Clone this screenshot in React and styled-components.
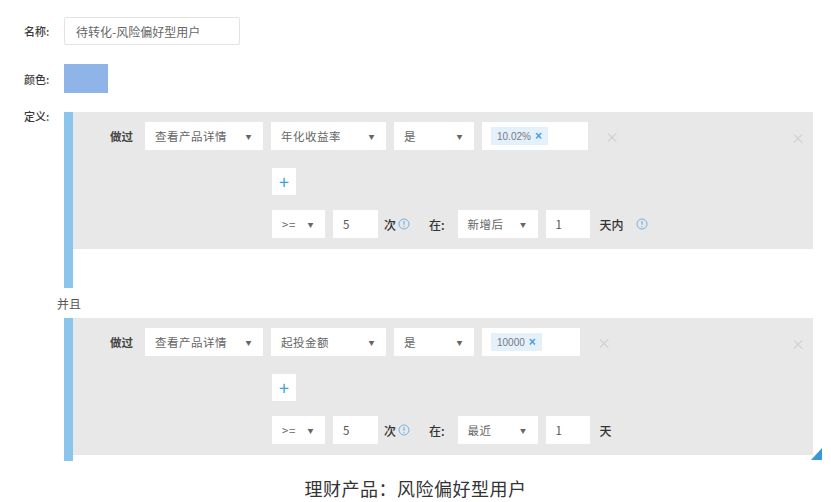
import React from "react";
import styled, { createGlobalStyle } from "styled-components";

const GlobalStyle = createGlobalStyle`
  html, body {
    margin: 0;
    padding: 0;
    background: #ffffff;
  }
  body {
    font-family: "Noto Sans CJK SC", "Noto Sans", "Liberation Sans", sans-serif;
    font-size: 12px;
    color: #333;
  }
`;

const Page = styled.div`
  width: 831px;
  height: 502px;
  overflow: hidden;
  box-sizing: border-box;
  padding: 17px 18px 0 24px;
`;

const Form = styled.div`
  display: grid;
  grid-template-columns: 40px 1fr;
  row-gap: 19px;
`;

const Label = styled.div`
  font-size: 11px;
  font-weight: 500;
  color: #3a3a3a;
  display: flex;
  align-items: ${(p) => (p.top ? "flex-start" : "center")};
  line-height: 16px;
  margin-top: ${(p) => (p.top ? "-4px" : "0")};
`;

const NameInput = styled.div`
  width: 176px;
  height: 28px;
  box-sizing: border-box;
  border: 1px solid #e3e3e3;
  border-radius: 2px;
  display: flex;
  align-items: center;
  padding-left: 11px;
  color: #666;
  font-size: 12px;
`;

const Swatch = styled.div`
  width: 44px;
  height: 29px;
  background: #8fb4e8;
`;

const Blocks = styled.div`
  display: flex;
  flex-direction: column;
`;

const Block = styled.div`
  display: flex;
  position: relative;
`;

const Bar = styled.div`
  width: 9px;
  background: #8cc5ec;
  flex-shrink: 0;
`;

const BlockBody = styled.div`
  flex: 1;
  display: flex;
  flex-direction: column;
`;

const Panel = styled.div`
  background: #e8e8e8;
  padding: 10px 0 11px 37px;
  display: flex;
  flex-direction: column;
  position: relative;
`;

const Spacer = styled.div`
  height: ${(p) => p.h}px;
`;

const Row = styled.div`
  display: flex;
  align-items: center;
  height: 28px;
  margin-left: ${(p) => p.indent || 0}px;
  margin-top: ${(p) => p.mt || 0}px;
`;

const Verb = styled.span`
  font-weight: 700;
  color: #444;
  font-size: 11.5px;
  width: 35px;
`;

const Select = styled.div`
  width: ${(p) => p.w}px;
  height: 28px;
  box-sizing: border-box;
  background: #fff;
  display: flex;
  align-items: center;
  justify-content: space-between;
  padding: 0 11px 0 10px;
  margin-right: 8px;
  color: #666;
  font-size: 11.5px;
  letter-spacing: 0.5px;
`;

const Caret = styled.span`
  font-size: 6px;
  color: #666;
`;

const TextBox = styled.div`
  width: ${(p) => p.w}px;
  height: 28px;
  box-sizing: border-box;
  background: #fff;
  display: flex;
  align-items: center;
  padding-left: ${(p) => p.pl || 10}px;
  margin-right: ${(p) => p.mr || 8}px;
  color: #555;
  font-size: 11.5px;
`;

const Tag = styled.span`
  display: inline-flex;
  align-items: center;
  gap: 4px;
  height: 18px;
  padding: 0 6px 0 6px;
  background: #e4f1fb;
  color: #778;
  font-size: 10px;
  font-family: "Liberation Sans", "Noto Sans", sans-serif;
`;

const TagClose = styled.span`
  color: #4a9fdc;
  font-size: 12px;
  font-weight: 700;
`;

const Remove = styled.span`
  color: #d0d0d0;
  font-size: 14px;
  margin-left: 9px;
`;

const RemoveFar = styled.span`
  position: absolute;
  right: 8px;
  top: 15px;
  color: #d0d0d0;
  font-size: 14px;
`;

const PlusButton = styled.div`
  width: 24px;
  height: 27px;
  background: #fff;
  display: flex;
  align-items: center;
  justify-content: center;
  color: #3f9fe0;
  font-size: 18px;
  line-height: 1;
`;

const Unit = styled.span`
  color: #333;
  font-weight: 500;
  margin-right: ${(p) => p.mr || 0}px;
  margin-left: ${(p) => p.ml || 0}px;
`;

const InfoWrap = styled.span`
  display: flex;
  margin-left: ${(p) => p.ml || 2}px;
`;

const InfoIcon = ({ ml }) => (
  <InfoWrap ml={ml}>
    <svg width="12" height="12" viewBox="0 0 12 12">
      <circle cx="6" cy="6" r="5" fill="none" stroke="#6fb3e8" strokeWidth="1" />
      <line x1="6" y1="3" x2="6" y2="6.8" stroke="#6fb3e8" strokeWidth="1.2" />
      <circle cx="6" cy="8.6" r="0.7" fill="#6fb3e8" />
    </svg>
  </InfoWrap>
);

const AndLabel = styled.div`
  height: 30px;
  display: flex;
  align-items: center;
  margin-left: -7px;
  color: #555;
  font-size: 12px;
`;

const Resize = styled.div`
  position: absolute;
  right: -9px;
  bottom: 1px;
  width: 0;
  height: 0;
  border-left: 11px solid transparent;
  border-bottom: 12px solid #3a97d8;
`;

const Caption = styled.div`
  text-align: center;
  margin-top: 14px;
  margin-left: -24px;
  margin-right: -18px;
  font-size: 18px;
  color: #333;
  letter-spacing: 0.5px;
`;

function Condition({ field, tag, tagWidth, when, unit, last }) {
  return (
    <Panel>
      <Row>
        <Verb>做过</Verb>
        <Select w={118}>
          查看产品详情<Caret>▼</Caret>
        </Select>
        <Select w={115}>
          {field}
          <Caret>▼</Caret>
        </Select>
        <Select w={80}>
          是<Caret>▼</Caret>
        </Select>
        <TextBox w={tagWidth} pl={9} mr={0}>
          <Tag>
            {tag}
            <TagClose>×</TagClose>
          </Tag>
        </TextBox>
        <Remove>×</Remove>
      </Row>
      <RemoveFar>×</RemoveFar>
      <Row indent={162} mt={17}>
        <PlusButton>+</PlusButton>
      </Row>
      <Row indent={162} mt={15}>
        <Select w={53}>
          <span>&gt;=</span>
          <Caret>▼</Caret>
        </Select>
        <TextBox w={45} mr={6}>5</TextBox>
        <Unit>次</Unit>
        <InfoIcon />
        <Unit ml={19} mr={13}>在:</Unit>
        <Select w={80}>
          {when}
          <Caret>▼</Caret>
        </Select>
        <TextBox w={44} mr={10}>1</TextBox>
        <Unit>{unit}</Unit>
        {last ? null : <InfoIcon ml={12} />}
      </Row>
    </Panel>
  );
}

export default function App() {
  return (
    <>
      <GlobalStyle />
      <Page>
        <Form>
          <Label>名称:</Label>
          <NameInput>待转化-风险偏好型用户</NameInput>
          <Label>颜色:</Label>
          <Swatch />
          <Label top>定义:</Label>
          <Blocks>
            <Block>
              <Bar />
              <BlockBody>
                <Condition field="年化收益率" tag="10.02%" tagWidth={106} when="新增后" unit="天内" />
                <Spacer h={39} />
              </BlockBody>
            </Block>
            <AndLabel>并且</AndLabel>
            <Block>
              <Bar />
              <BlockBody>
                <Condition field="起投金额" tag="10000" tagWidth={98} when="最近" unit="天" last />
                <Spacer h={6} />
              </BlockBody>
              <Resize />
            </Block>
          </Blocks>
        </Form>
        <Caption>理财产品：风险偏好型用户</Caption>
      </Page>
    </>
  );
}
